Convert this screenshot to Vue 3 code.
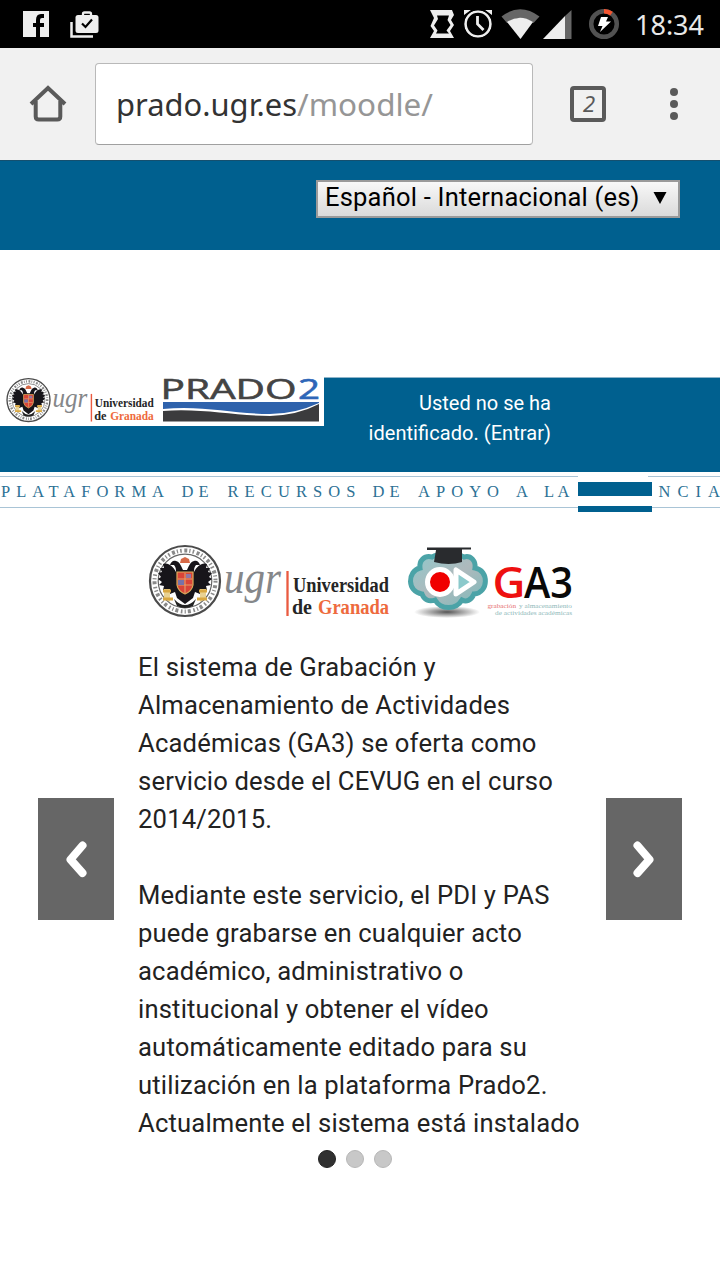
<script setup>
const words = [
  { t: 'PLATAFORMA', x: 1, w: 163 },
  { t: 'DE', x: 181.5, w: 27 },
  { t: 'RECURSOS', x: 227.5, w: 128 },
  { t: 'DE', x: 372.5, w: 27 },
  { t: 'APOYO', x: 418, w: 81 },
  { t: 'A', x: 516, w: 11 },
  { t: 'LA', x: 544, w: 25.5 },
  { t: 'NCIA', x: 658.5, w: 61.5 }
]
const lines = [
  'El sistema de Grabación y',
  'Almacenamiento de Actividades',
  'Académicas (GA3) se oferta como',
  'servicio desde el CEVUG en el curso',
  '2014/2015.',
  '',
  'Mediante este servicio, el PDI y PAS',
  'puede grabarse en cualquier acto',
  'académico, administrativo o',
  'institucional y obtener el vídeo',
  'automáticamente editado para su',
  'utilización en la plataforma Prado2.',
  'Actualmente el sistema está instalado'
]
</script>

<template>
  <div class="screen">
    <svg class="defs" width="0" height="0">
      <symbol id="ugr" viewBox="0 0 245 80" overflow="visible">
        <circle cx="39" cy="40" r="35" fill="#fff" stroke="#4b4b4b" stroke-width="2.2" />
        <circle cx="39" cy="40" r="30.5" fill="none" stroke="#8a8a8a" stroke-width="4" stroke-dasharray="1.6 2.6 3 2 1.2 2.2" />
        <circle cx="39" cy="40" r="26.8" fill="#fff" stroke="#666" stroke-width="1.2" />
        <path d="M37 29C35 25 34 21 30 20C27 19 25 21 24 24L28 24C30 26 30 29 30 31C27 25 22 21 17 23L18 27L14 27L16 31L12 32L15 36L12 38L16 41L13 44L18 45L17 49L22 49L24 53L29 51L31 57L39 63L47 57L49 51L54 53L56 49L61 49L60 45L65 44L62 41L66 38L63 36L66 32L62 31L64 27L60 27L61 23C56 21 51 25 48 31C48 29 48 26 50 24L54 24C53 21 51 19 48 20C44 21 43 25 41 29Z" fill="#17151a" />
        <path d="M34 22L35 18L39 16L43 18L44 22Z" fill="#d76a48" />
        <path d="M31 31H47V44Q46 50 39 53Q32 50 31 44Z" fill="#d94438" stroke="#ddb05d" stroke-width="1.2" />
        <path d="M32 38H46M39 32V52M32 44H46" stroke="#e2a069" stroke-width="1.1" />
        <path d="M32 39H38V44H32Z" fill="#7772a8" />
        <path d="M40 33H45V37H40Z" fill="#8f76a4" />
        <path d="M18 48H24V61L18 57ZM54 48H60V57L54 61Z" fill="#e9d293" />
        <path d="M17 50H25M17 58H27M53 50H61M51 58H61" stroke="#d9a843" stroke-width="3" />
        <path d="M28 58Q39 70 50 58L47 65Q39 69 31 65Z" fill="#222" />
        <text x="78" y="51.500" textLength="57" lengthAdjust="spacingAndGlyphs" class="ugr">ugr</text>
        <path d="M141.500 30V75" stroke="#ea5a40" stroke-width="2.3" />
        <text x="147" y="51" textLength="96" lengthAdjust="spacingAndGlyphs" class="uni" fill="#252525">Universidad</text>
        <text x="146" y="73" textLength="20" lengthAdjust="spacingAndGlyphs" class="uni" fill="#252525">de</text>
        <text x="172" y="73" textLength="71" lengthAdjust="spacingAndGlyphs" class="uni" fill="#ee6a3d">Granada</text>
      </symbol>
    </svg>

    <header class="status">
      <svg width="720" height="48" viewBox="0 0 720 48">
        <path d="M23 11H49V37H40V27H44V23H40V20Q40 18 42 18H44V14H41Q36 14 36 20V23H33V27H36V37H23Z" fill="#eee" />
        <path d="M71.500 22V36.500H93" fill="none" stroke="#eee" stroke-width="2.500" />
        <path d="M83 16V14Q83 12.500 84.500 12.500H89.500Q91 12.500 91 14V16" fill="none" stroke="#eee" stroke-width="2.300" />
        <rect x="75.500" y="15" width="23" height="18" rx="2.500" fill="#eee" />
        <path d="M82 23.500L85.500 27L92 19.500" fill="none" stroke="#000" stroke-width="2.200" />
        <path d="M430 10H452L454 15L451 20L454 25L450 31L454 38H430L434 31L430.500 26L434 18Z" fill="#eee" />
        <path d="M437 15.500H449L447.500 20L450.500 25L446.500 30.500L449 33.500H436L437.500 30.500L434 25.500L438 19Z" fill="#000" />
        <circle cx="478" cy="24" r="12.500" fill="none" stroke="#eee" stroke-width="2.700" />
        <path d="M477.500 16V24L483.500 30" fill="none" stroke="#eee" stroke-width="2.800" />
        <path d="M464 15V10H471ZM492 15V10H485Z" fill="#eee" />
        <circle cx="478" cy="24" r="14.500" fill="none" stroke="#000" stroke-width="1.300" />
        <path d="M501.500 16.500Q520 2 539.500 16.500L533.500 23Q520 13.500 507 23Z" fill="#666" />
        <path d="M507 22Q520 13.500 533 22L520.500 39Z" fill="#eee" />
        <path d="M571.500 10V39H565V16Z" fill="#666" />
        <path d="M543 39L565 16V39Z" fill="#eee" />
        <circle cx="604" cy="24" r="12.800" fill="none" stroke="#525252" stroke-width="4.500" />
        <path d="M604 11.200A12.800 12.800 0 0 1 611.500 13.600" fill="none" stroke="#f45430" stroke-width="4.500" />
        <path d="M601 17H608L606 21.500H611L600 32L602.500 26H598Z" fill="#fff" />
        <text x="635" y="34.500" textLength="69" lengthAdjust="spacingAndGlyphs" class="clock">18:34</text>
      </svg>
    </header>

    <div class="toolbar">
      <svg class="home" width="38" height="38" viewBox="0 0 38 38">
        <path d="M2 19L19 3L36 19M6.700 16V31.500Q6.700 34.500 9.700 34.500H28.300Q31.300 34.500 31.300 31.500V16" fill="none" stroke="#5a5a5a" stroke-width="4" />
      </svg>
      <div class="url">
        <svg width="420" height="80" viewBox="96 64 420 80">
          <text x="116" y="115.500" textLength="181" lengthAdjust="spacingAndGlyphs" fill="#333">prado.ugr.es</text>
          <text x="297" y="115.500" textLength="136" lengthAdjust="spacingAndGlyphs" fill="#969696">/moodle/</text>
        </svg>
      </div>
      <div class="tabs">2</div>
      <div class="more"><i /><i /><i /></div>
    </div>

    <div class="lang">
      <div class="select">
        <svg width="360" height="34" viewBox="318 182 360 34">
          <text x="325" y="206" textLength="314.500" lengthAdjust="spacing">Español - Internacional (es)</text>
          <path d="M653.500 192H666.500L660 204Z" />
        </svg>
      </div>
    </div>

    <div class="banner">
      <div class="logos">
        <svg width="324" height="54" viewBox="0 372 324 54">
          <use href="#ugr" x="4.500" y="375.500" width="150.500" height="49.100" />
          <text x="160.500" y="399" textLength="136" lengthAdjust="spacingAndGlyphs" class="prado" fill="#444" stroke="#444">PRADO</text>
          <text x="298" y="399" textLength="22" lengthAdjust="spacingAndGlyphs" class="prado" fill="#2e66b8" stroke="#2e66b8">2</text>
          <path d="M163 402H319V403Q295 414 270 414C235 414 202 405 163 409Z" fill="#2e62ac" />
          <path d="M163 411C202 408 235 416 270 416Q298 415 319 404V421.500H163Z" fill="#3b3b3d" />
        </svg>
      </div>
      <div class="login">
        <svg width="190" height="70" viewBox="365 385 190 70">
          <text x="419" y="410" textLength="132">Usted no se ha</text>
          <text x="368.500" y="440" textLength="182.500">identificado. (Entrar)</text>
        </svg>
      </div>
    </div>

    <div class="tagline">
      <svg width="720" height="40" viewBox="0 472 720 40">
        <path d="M0 476.500H578M648 476.500H720M0 507.500H720" stroke="#a9c4d6" />
        <text v-for="w in words" :key="w.x" :x="w.x" y="497" :textLength="w.w">{{ w.t }}</text>
        <path d="M578 482H652V496H578ZM578 506H652V512H578Z" fill="#00608f" />
        <path d="M578 496H652V506H578Z" fill="#fff" />
      </svg>
    </div>

    <main class="slider">
      <div class="arrow">
        <svg width="76" height="122" viewBox="0 0 76 122"><path d="M44.500 47.500L32.500 61.500L44.500 75" /></svg>
      </div>
      <article class="slide">
        <svg class="brands" width="450" height="90" viewBox="138 535 450 90">
          <defs>
            <radialGradient id="shade"><stop offset="0" stop-color="#555" /><stop offset="1" stop-color="#fff" /></radialGradient>
            <linearGradient id="cloud" x1="0" y1="0" x2="1" y2="1"><stop offset="0" stop-color="#8fc9cc" /><stop offset=".5" stop-color="#aeb9bc" /><stop offset="1" stop-color="#79babb" /></linearGradient>
          </defs>
          <use href="#ugr" x="146" y="541" width="245" height="80" />
          <ellipse cx="447" cy="612" rx="33" ry="6" fill="url(#shade)" />
          <path d="M432 557C438 553 458 553 464 557C471 555 476 561 475 568C489 570 489 593 474 594C471 601 466 602 462 600C456 610 441 610 435 600C429 602 424 600 422 594C407 592 407 571 420 568C419 561 424 555 432 557Z" fill="url(#cloud)" stroke="#4ba3a7" stroke-width="5" />
          <circle cx="440" cy="582" r="12.500" fill="#f00000" stroke="#fff" stroke-width="5" />
          <path d="M456 570V594L474 582Z" fill="#8bc9cb" stroke="#fff" stroke-width="5" stroke-linejoin="round" />
          <path d="M427 547.500H471V549.500H462V562Q449 566 434 562L436 550H427Z" fill="#292b2e" />
          <text x="492.500" y="598" textLength="33" lengthAdjust="spacingAndGlyphs" class="ga" fill="#ee1010">G</text>
          <text x="524" y="598" textLength="49" lengthAdjust="spacingAndGlyphs" class="ga" fill="#090909">A3</text>
          <text x="487.500" y="607.500" textLength="28.500" lengthAdjust="spacingAndGlyphs" class="tiny" fill="#e66f70">grabación</text>
          <text x="519" y="607.500" textLength="53" lengthAdjust="spacingAndGlyphs" class="tiny" fill="#8fb9ba">y almacenamiento</text>
          <text x="495" y="615" textLength="77" lengthAdjust="spacingAndGlyphs" class="tiny" fill="#8fb9ba">de actividades académicas</text>
        </svg>
        <p class="copy"><span v-for="(l, i) in lines" :key="i">{{ l }}</span></p>
      </article>
      <div class="arrow">
        <svg width="76" height="122" viewBox="0 0 76 122"><path d="M31.500 47.500L43.500 61.500L31.500 75" /></svg>
      </div>
    </main>
    <nav class="dots"><i class="on" /><i /><i /></nav>
  </div>
</template>

<style>
body { background: #fff; }
</style>

<style scoped>
.screen { width: 720px; height: 1280px; overflow: hidden; background: #fff; font-family: Roboto, "Liberation Sans", sans-serif; }
.defs { position: absolute; }
svg { display: block; flex: none; }
.ugr { font: italic 46px "Liberation Serif", serif; fill: #85878a; }
.uni { font: bold 20px "Liberation Serif", serif; }
.status { height: 48px; background: #000; }
.clock { font: 28px "Noto Sans", sans-serif; fill: #e8e8e8; }
.toolbar { box-sizing: border-box; height: 112px; display: flex; background: #f1f1f1; padding: 15px 0 0 29px; }
.home { margin-top: 22px; }
.url { box-sizing: border-box; width: 438px; height: 82px; margin-left: 28px; border: 1px solid #b9b9b9; border-bottom-color: #a0a0a0; border-radius: 4px; background: #fff; }
.url text { font: 31px "Noto Sans", sans-serif; }
.tabs { box-sizing: border-box; width: 36px; height: 36px; margin: 23px 0 0 37px; border: 4px solid #5a5a5a; border-radius: 4px; font: italic 22px/27px "Noto Sans", sans-serif; color: #5a5a5a; text-align: center; padding-left: 2px; }
.more { width: 8px; margin: 25px 0 0 64px; display: flex; flex-direction: column; gap: 4px; }
.more i { width: 8px; height: 8px; border-radius: 50%; background: #5a5a5a; }
.lang { box-sizing: border-box; height: 90px; padding: 19px 40px 0 0; display: flex; justify-content: flex-end; background: #00608f; border-top: 1px solid #15506f; }
.select { box-sizing: border-box; width: 364px; height: 38px; border: 2px solid #9a9a9a; background: linear-gradient(#f8f8f8, #dadada); }
.select text { font-size: 25.5px; fill: #000; }
.banner { box-sizing: border-box; height: 95px; margin-top: 127px; display: flex; background: #00608f; border-top: 1px solid #8fb5ca; }
.logos { width: 324px; height: 54px; margin-top: -6px; background: #fff; }
.prado { font: 27.500px "Open Sans", sans-serif; stroke-width: .6px; }
.login { margin: 7px 0 0 41px; }
.login text { font-size: 20px; fill: #fff; }
.tagline text { font: 16.500px "Liberation Serif", serif; fill: #2d7195; }
.slider { height: 630px; display: flex; padding: 23px 38px 0; }
.arrow { flex: none; width: 76px; height: 122px; margin-top: 263px; background: #666; }
.arrow path { fill: none; stroke: #fff; stroke-width: 8; stroke-linecap: round; stroke-linejoin: round; }
.slide { width: 468px; margin: 0 0 0 24px; flex: none; }
.ga { font: 600 44px "Open Sans", sans-serif; }
.tiny { font: 6px "Liberation Serif", serif; }
.copy { margin: 23px 0 0; font-size: 25.600px; line-height: 38px; letter-spacing: .18px; color: #222; }
.copy span { display: block; min-height: 38px; white-space: nowrap; }
.dots { display: flex; gap: 10px; margin: -15px 0 0 318px; }
.dots i { box-sizing: border-box; width: 18px; height: 18px; border-radius: 50%; background: #c8c8c8; border: 1px solid #b7b7b7; }
.dots .on { background: #303030; border-color: #222; }
</style>
